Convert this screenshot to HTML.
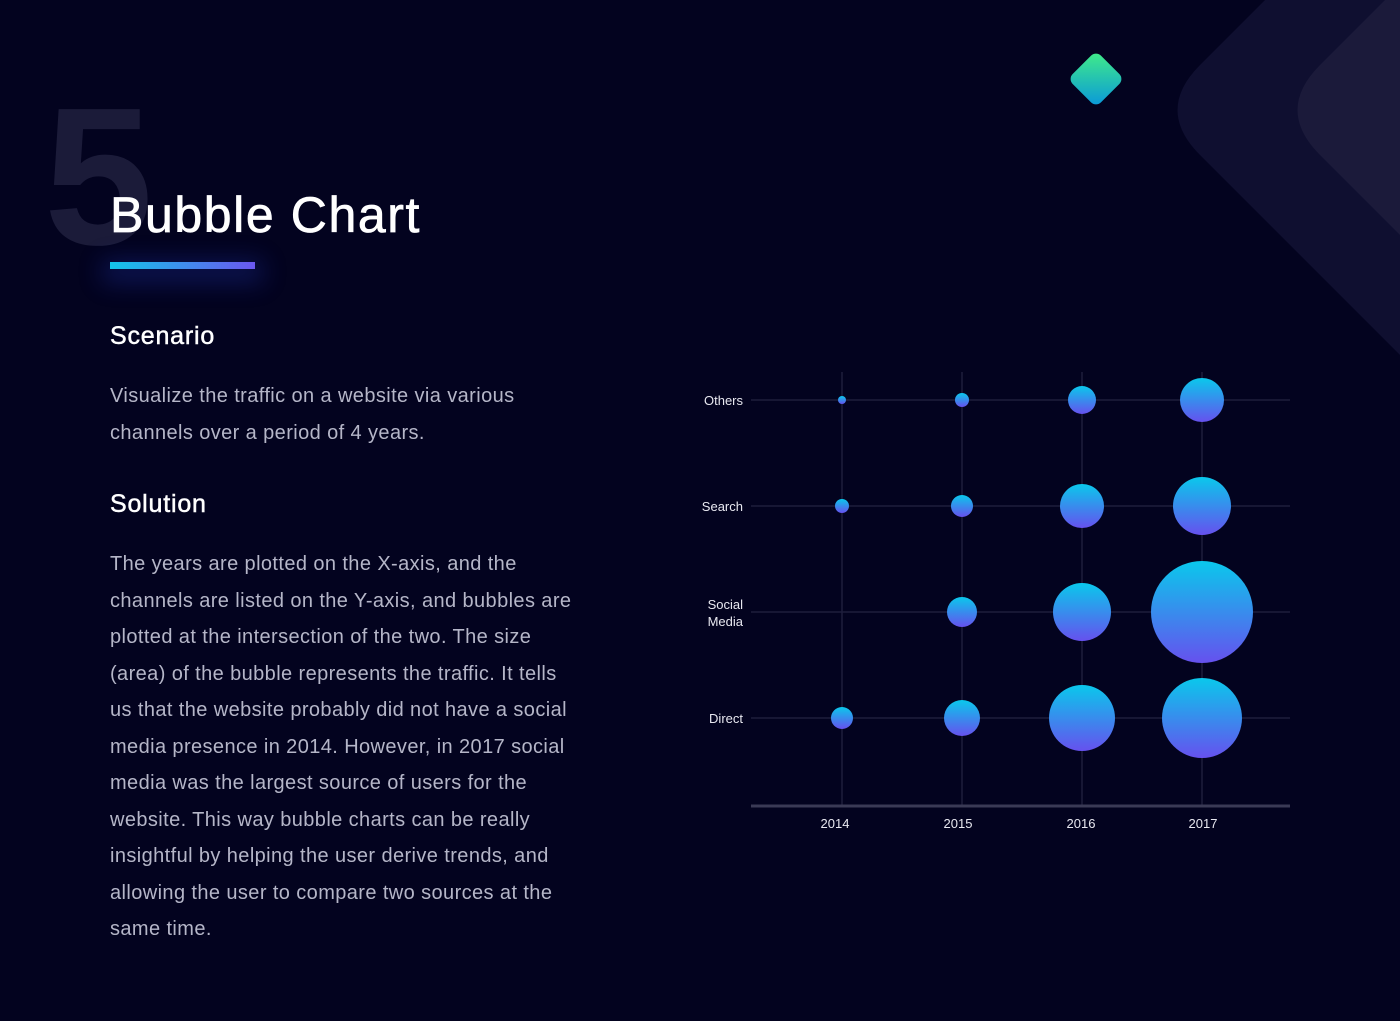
<!DOCTYPE html>
<html><head><meta charset="utf-8"><style>
*{margin:0;padding:0;box-sizing:border-box}
body{width:1400px;height:1021px;background:#03031f;position:relative;overflow:hidden;font-family:"Liberation Sans",sans-serif}
.abs{position:absolute}
.five{left:44px;top:79px;font-size:196px;font-weight:bold;color:#1b1b39;line-height:1}
.title{left:110px;top:184px;font-size:50px;color:#fff;line-height:62px;letter-spacing:1.6px;-webkit-text-stroke:0.7px #fff}
.bar{left:110px;top:262px;width:145px;height:7px;background:linear-gradient(90deg,#12c6ea,#6b57f0);box-shadow:0 6px 24px 8px rgba(40,70,220,0.28)}
h2{position:absolute;left:110px;font-size:25px;font-weight:normal;color:#fff;-webkit-text-stroke:0.5px #fff;letter-spacing:0.8px}
p{position:absolute;left:110px;width:560px;font-size:20px;line-height:36.5px;color:#b5b6c8;letter-spacing:0.4px;white-space:nowrap}
.lbl{font-size:13px;color:#e8e8f0;text-align:right;width:80px;line-height:17px}
.yr{font-size:13px;color:#e8e8f0;width:60px;text-align:center}
</style></head><body>
<svg class="abs" style="left:0;top:0" width="1400" height="1021">
<defs>
<linearGradient id="dg" x1="0" y1="0" x2="1" y2="1"><stop offset="0" stop-color="#42ee86"/><stop offset="1" stop-color="#0896dc"/></linearGradient>
<linearGradient id="bg" x1="0" y1="0" x2="0" y2="1"><stop offset="0" stop-color="#0ac8ec"/><stop offset="1" stop-color="#6651ee"/></linearGradient>
</defs>
<path d="M1265,0 L1200,65 Q1155,110 1200,155 L1400,355 L1400,0 Z" fill="#0f0f30"/>
<path d="M1385,0 L1320,65 Q1275,110 1320,155 L1400,235 L1400,0 Z" fill="#1b1a3a"/>
<rect x="1076" y="59" width="40" height="40" rx="7" fill="url(#dg)" transform="rotate(45 1096 79)"/>
<g stroke="#1e1e3c" stroke-width="1.5">
<line x1="842" y1="372" x2="842" y2="806"/><line x1="962" y1="372" x2="962" y2="806"/>
<line x1="1082" y1="372" x2="1082" y2="806"/><line x1="1202" y1="372" x2="1202" y2="806"/>
<line x1="751" y1="400" x2="1290" y2="400"/><line x1="751" y1="506" x2="1290" y2="506"/>
<line x1="751" y1="612" x2="1290" y2="612"/><line x1="751" y1="718" x2="1290" y2="718"/>
</g>
<line x1="751" y1="806" x2="1290" y2="806" stroke="#3a3a55" stroke-width="3"/>
<g fill="url(#bg)">
<circle cx="842" cy="400" r="4"/><circle cx="962" cy="400" r="7"/><circle cx="1082" cy="400" r="14"/><circle cx="1202" cy="400" r="22"/>
<circle cx="842" cy="506" r="7"/><circle cx="962" cy="506" r="11"/><circle cx="1082" cy="506" r="22"/><circle cx="1202" cy="506" r="29"/>
<circle cx="962" cy="612" r="15"/><circle cx="1082" cy="612" r="29"/><circle cx="1202" cy="612" r="51"/>
<circle cx="842" cy="718" r="11"/><circle cx="962" cy="718" r="18"/><circle cx="1082" cy="718" r="33"/><circle cx="1202" cy="718" r="40"/>
</g>
</svg>
<div class="abs five">5</div>
<div class="abs title">Bubble Chart</div>
<div class="abs bar"></div>
<h2 style="top:322px">Scenario</h2>
<p style="top:378px">Visualize the traffic on a website via various<br>channels over a period of 4 years.</p>
<h2 style="top:490px">Solution</h2>
<p style="top:546px">The years are plotted on the X-axis, and the<br>channels are listed on the Y-axis, and bubbles are<br>plotted at the intersection of the two. The size<br>(area) of the bubble represents the traffic. It tells<br>us that the website probably did not have a social<br>media presence in 2014. However, in 2017 social<br>media was the largest source of users for the<br>website. This way bubble charts can be really<br>insightful by helping the user derive trends, and<br>allowing the user to compare two sources at the<br>same time.</p>
<div class="abs lbl" style="left:663px;top:392px">Others</div>
<div class="abs lbl" style="left:663px;top:498px">Search</div>
<div class="abs lbl" style="left:663px;top:596px">Social<br>Media</div>
<div class="abs lbl" style="left:663px;top:710px">Direct</div>
<div class="abs yr" style="left:805px;top:816px">2014</div>
<div class="abs yr" style="left:928px;top:816px">2015</div>
<div class="abs yr" style="left:1051px;top:816px">2016</div>
<div class="abs yr" style="left:1173px;top:816px">2017</div>
</body></html>
